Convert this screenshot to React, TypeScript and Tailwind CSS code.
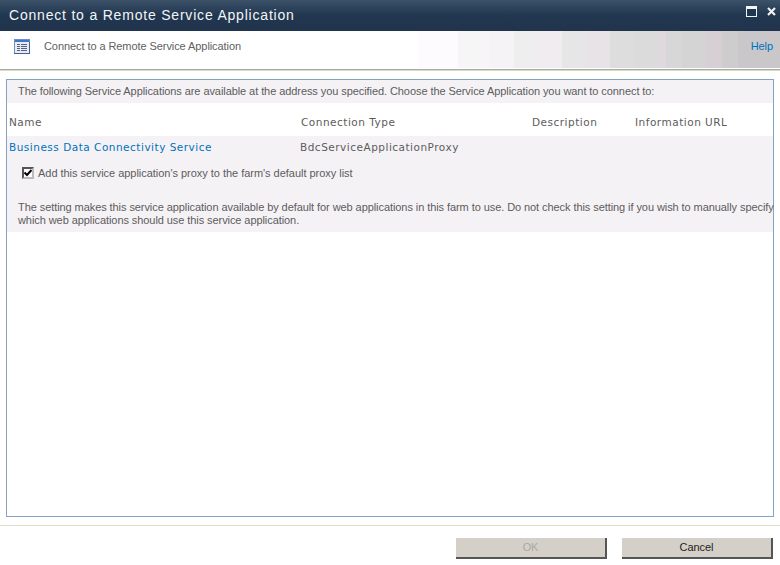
const bands = [
  { w: 40, c: '#fefbfe' },
  { w: 32, c: '#f6f6f6' },
  { w: 24, c: '#f6f3f6' },
  { w: 24, c: '#eeeeee' },
  { w: 24, c: '#f0ecef' },
  { w: 24, c: '#e6e6e6' },
  { w: 24, c: '#e8e3e6' },
  { w: 24, c: '#dddddd' },
  { w: 24, c: '#dcdbdc' },
  { w: 8, c: '#dfd8dc' },
  { w: 16, c: '#d7d7d7' },
  { w: 24, c: '#d5d4d5' },
  { w: 16, c: '#d6cfd3' },
  { w: 16, c: '#cdcdcd' },
  { w: 42, c: '#c9c7c9' },
];

const columns = [
  { label: 'Connection Type', width: 'w-[231px]' },
  { label: 'Description', width: 'w-[103px]' },
  { label: 'Information URL', width: 'w-[120px]' },
];

function ListIcon() {
  return (
    <svg width="16" height="15" viewBox="0 0 16 15" className="shrink-0">
      <rect x="0.5" y="0.5" width="15" height="14" fill="#e6ebf6" stroke="#6f8fc4" />
      <rect x="1" y="1" width="14" height="2" fill="#3f74cf" />
      <path d="M3 5.5h3M7 5.5h6M3 7.5h3M7 7.5h6M3 9.5h3M7 9.5h6M3 11.5h3M7 11.5h6" stroke="#56617a" />
      <path d="M0 14.5h16M15.5 3v12" stroke="#46618f" />
    </svg>
  );
}

function TitleButtons() {
  return (
    <div className="self-start flex items-center gap-[10px] pt-[6px]">
      <svg width="11" height="11" viewBox="0 0 11 11">
        <rect x="0.5" y="0.5" width="10" height="10" fill="#1f3550" stroke="#f4f4f4" />
        <rect x="1" y="1" width="9" height="2" fill="#f4f4f4" />
      </svg>
      <svg width="9" height="9" viewBox="0 0 9 9">
        <path d="M1 1l7 7M8 1l-7 7" stroke="#f0f0f0" strokeWidth="2.2" />
      </svg>
    </div>
  );
}

function DialogButton({ label, disabled }: { label: string; disabled?: boolean }) {
  return (
    <button
      disabled={disabled}
      className={`w-[151px] h-[21px] bg-[#d4d0c8] border-r-2 border-b-2 border-r-[#555] border-b-[#555] text-[11px] ${
        disabled ? 'text-[#a8a8a4]' : 'text-[#222]'
      }`}
    >
      {label}
    </button>
  );
}

export default function App() {
  return (
    <div className="w-[780px] h-[565px] bg-white flex flex-col overflow-hidden font-['Liberation_Sans',sans-serif] text-[11px] tracking-[-0.075px] text-[#5c5c5c]">
      <div className="h-[31px] shrink-0 flex items-center justify-between pl-[9px] pr-[4px] bg-gradient-to-b from-[#3c5269] via-[#21364f] to-[#21344d]">
        <span className="text-[14px] tracking-[0.8px] text-[#f2f5f8] whitespace-nowrap">
          Connect to a Remote Service Application
        </span>
        <TitleButtons />
      </div>

      <div className="relative h-[38px] shrink-0 flex items-start pl-[14px] pb-[1px]">
        <div className="mt-[8px]">
          <ListIcon />
        </div>
        <span className="ml-[14px] mt-[7px] text-[#606060] text-[11px]">Connect to a Remote Service Application</span>
        <div className="ml-auto flex h-full">
          {bands.map((b, i) => (
            <div key={i} className="h-full" style={{ width: b.w, backgroundColor: b.c }} />
          ))}
        </div>
        <a className="absolute right-[7px] top-[7px] text-[#0072bc] text-[11px]">Help</a>
      </div>

      <div className="h-[1px] shrink-0 bg-[#a8aaa4]" />
      <div className="h-[1px] shrink-0 bg-[#d8dcc0]" />

      <div className="mx-[6px] mt-[8px] h-[438px] shrink-0 border border-[#85a3c0]">
        <div className="h-[23px] flex items-center pl-[11px] bg-[#f5f2f6] whitespace-nowrap">
          The following Service Applications are available at the address you specified. Choose the Service Application you want to connect to:
        </div>
        <div className="h-[33px] flex items-center pt-[6px] pl-[2px] font-['DejaVu_Sans',sans-serif] text-[10.5px] tracking-[0.5px] text-[#5c5c5c]">
          <div className="w-[292px]">Name</div>
          {columns.map((col) => (
            <div key={col.label} className={col.width}>
              {col.label}
            </div>
          ))}
        </div>
        <div className="h-[96px] bg-[#f5f2f6]">
          <div className="h-[22px] flex items-center pt-[2px] pl-[2px] font-['DejaVu_Sans',sans-serif] text-[10.5px] tracking-[0.5px]">
            <a className="w-[291px] text-[#0072bc]">Business Data Connectivity Service</a>
            <span>BdcServiceApplicationProxy</span>
          </div>
          <div className="flex items-center h-[18px] pl-[15px] mt-[6px]">
            <span className="w-[12px] h-[12px] shrink-0 flex items-center justify-center bg-white border-2 border-t-[#555] border-l-[#555] border-r-[#bbb] border-b-[#bbb]">
              <svg width="8" height="8" viewBox="0 0 8 8" className="shrink-0">
                <path d="M0.5 3.5l2.5 2.5L7.5 1" fill="none" stroke="#000" strokeWidth="2" />
              </svg>
            </span>
            <span className="ml-[4px] tracking-[-0.03px]">Add this service application's proxy to the farm's default proxy list</span>
          </div>
          <div className="pl-[11px] mt-[19px] leading-[13px] whitespace-nowrap">
            <div>The setting makes this service application available by default for web applications in this farm to use. Do not check this setting if you wish to manually specify</div>
            <div>which web applications should use this service application.</div>
          </div>
        </div>
      </div>

      <div className="h-[1px] mt-[8px] shrink-0 bg-[#e2dccb]" />
      <div className="flex justify-end gap-[15px] pr-[7px] pt-[12px]">
        <DialogButton label="OK" disabled />
        <DialogButton label="Cancel" />
      </div>
    </div>
  );
}
